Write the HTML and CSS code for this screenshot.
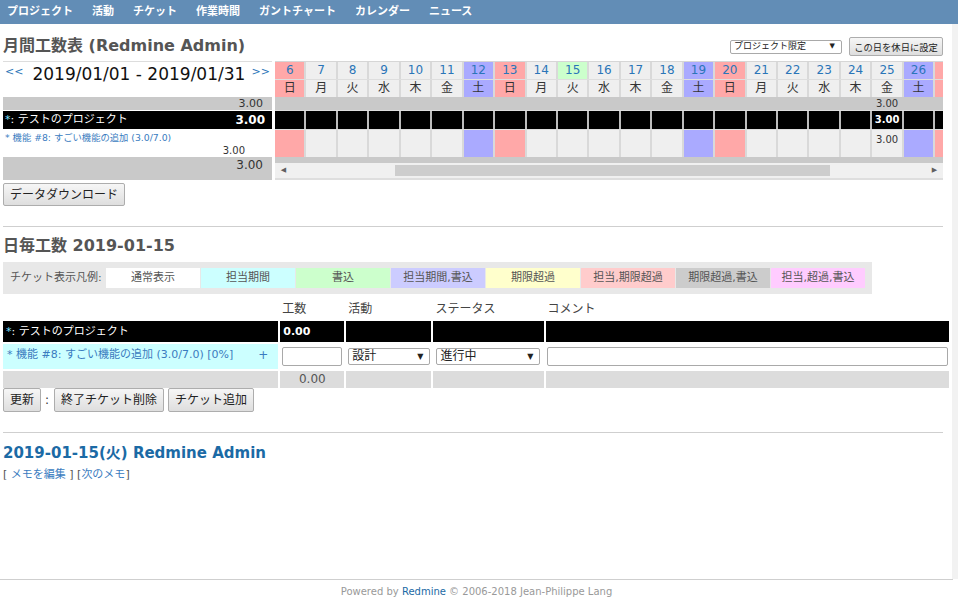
FILE: index.html
```html
<!DOCTYPE html>
<html lang="ja">
<head>
<meta charset="utf-8">
<title>月間工数表</title>
<link rel="stylesheet" href="styles.css">
</head>
<body>
<nav class="topnav">
  <a>プロジェクト</a><a>活動</a><a>チケット</a><a>作業時間</a><a>ガントチャート</a><a>カレンダー</a><a>ニュース</a>
</nav>
<div class="main">
  <div class="content">
    <div class="title-row">
      <h2>月間工数表 (Redmine Admin)</h2>
      <div class="actions">
        <span class="sel sel-small"><span>プロジェクト限定</span><span class="arr">▼</span></span>
        <button class="btn btn-small">この日を休日に設定</button>
      </div>
    </div>

    <div class="month">
      <div class="mleft">
        <div class="mhead"><a class="nav-arrow">&lt;&lt;</a><span class="range">2019/01/01 - 2019/01/31</span><a class="nav-arrow nav-next">&gt;&gt;</a></div>
        <div class="lrow lgray">3.00</div>
        <div class="lrow lblack"><span><span class="star">*</span>: テストのプロジェクト</span><b>3.00</b></div>
        <div class="lrow lticket"><a>* 機能 #8: すごい機能の追加 (3.0/7.0)</a><span class="lt-val">3.00</span></div>
        <div class="lrow lgray lbottom">3.00</div>
      </div>
      <div class="mright">
        <div class="drow dates">
          <div class="sun">6</div><div>7</div><div>8</div><div>9</div><div>10</div><div>11</div><div class="sat">12</div><div class="sun">13</div><div>14</div><div class="today">15</div><div>16</div><div>17</div><div>18</div><div class="sat">19</div><div class="sun">20</div><div>21</div><div>22</div><div>23</div><div>24</div><div>25</div><div class="sat">26</div><div class="sun"></div>
        </div>
        <div class="drow wdays">
          <div class="sun">日</div><div>月</div><div>火</div><div>水</div><div>木</div><div>金</div><div class="sat">土</div><div class="sun">日</div><div>月</div><div>火</div><div>水</div><div>木</div><div>金</div><div class="sat">土</div><div class="sun">日</div><div>月</div><div>火</div><div>水</div><div>木</div><div>金</div><div class="sat">土</div><div class="sun"></div>
        </div>
        <div class="drow dgray">
          <div></div><div></div><div></div><div></div><div></div><div></div><div></div><div></div><div></div><div></div><div></div><div></div><div></div><div></div><div></div><div></div><div></div><div></div><div></div><div>3.00</div><div></div><div></div>
        </div>
        <div class="drow dblack">
          <div></div><div></div><div></div><div></div><div></div><div></div><div></div><div></div><div></div><div></div><div></div><div></div><div></div><div></div><div></div><div></div><div></div><div></div><div></div><div>3.00</div><div></div><div></div>
        </div>
        <div class="drow dticket">
          <div class="sun"></div><div></div><div></div><div></div><div></div><div></div><div class="sat"></div><div class="sun"></div><div></div><div></div><div></div><div></div><div></div><div class="sat"></div><div class="sun"></div><div></div><div></div><div></div><div></div><div>3.00</div><div class="sat"></div><div class="sun"></div>
        </div>
        <div class="dfoot"></div>
        <div class="hscroll">
          <span class="sb-btn">◀</span>
          <div class="sb-track"><div class="sb-thumb"></div></div>
          <span class="sb-btn">▶</span>
        </div>
      </div>
    </div>

    <button class="btn btn-dl">データダウンロード</button>

    <hr class="sep sep1">

    <h2 class="h2-daily">日毎工数 2019-01-15</h2>

    <div class="legend">
      <span class="legend-label">チケット表示凡例:</span>
      <span class="lg lg-normal">通常表示</span>
      <span class="lg lg-assign">担当期間</span>
      <span class="lg lg-write">書込</span>
      <span class="lg lg-aw">担当期間,書込</span>
      <span class="lg lg-over">期限超過</span>
      <span class="lg lg-ao">担当,期限超過</span>
      <span class="lg lg-ow">期限超過,書込</span>
      <span class="lg lg-aow">担当,超過,書込</span>
    </div>

    <table class="daily">
      <colgroup><col class="c1"><col class="c2"><col class="c3"><col class="c4"><col class="c5"></colgroup>
      <thead>
        <tr><th></th><th>工数</th><th>活動</th><th>ステータス</th><th>コメント</th></tr>
      </thead>
      <tbody>
        <tr class="r-black"><td><span class="star">*</span>: テストのプロジェクト</td><td><b>0.00</b></td><td></td><td></td><td></td></tr>
        <tr class="r-ticket">
          <td class="tk"><div class="tk-inner"><a>* 機能 #8: すごい機能の追加 (3.0/7.0) [0%]</a><span class="plus">+</span></div></td>
          <td><input class="inp inp-hours" type="text"></td>
          <td><span class="sel sel-act"><span>設計</span><span class="arr">▼</span></span></td>
          <td><span class="sel sel-st"><span>進行中</span><span class="arr">▼</span></span></td>
          <td><input class="inp inp-comment" type="text"></td>
        </tr>
        <tr class="r-total"><td></td><td class="tot">0.00</td><td></td><td></td><td></td></tr>
      </tbody>
    </table>

    <div class="buttons">
      <button class="btn">更新</button><span class="colon">:</span><button class="btn">終了チケット削除</button><button class="btn">チケット追加</button>
    </div>

    <hr class="sep sep2">

    <h3 class="memo-title">2019-01-15(火) Redmine Admin</h3>
    <p class="memo-links">[ <a>メモを編集</a> ] [<a>次のメモ</a>]</p>
  </div>
  <div class="strip"></div>
</div>
<footer class="footer">Powered by <a>Redmine</a> © 2006-2018 Jean-Philippe Lang</footer>
</body>
</html>
```

FILE: styles.css
```css
* { box-sizing: border-box; }

html, body { margin: 0; padding: 0; }

body {
  width: 958px;
  min-height: 611px;
  display: flex;
  flex-direction: column;
  background: #fff;
  color: #333;
  font-family: "DejaVu Sans", "Noto Sans CJK JP", sans-serif;
  font-size: 12px;
  line-height: 1.2;
}

a { color: #1b6aa5; text-decoration: none; }

/* top menu */
.topnav {
  height: 24px;
  background: #628db6;
  display: flex;
  align-items: center;
  gap: 19px;
  padding-left: 7px;
}
.topnav a {
  color: #fff;
  font-weight: bold;
  font-size: 11px;
}

.main {
  flex: 1;
  display: flex;
}
.content {
  width: 952px;
  padding: 0 9px 0 3px;
}
.strip {
  flex: 1;
  background: #f2f2f2;
}

/* title */
.title-row {
  margin-top: 12px;
  height: 20px;
  display: flex;
  justify-content: space-between;
  align-items: center;
}
h2 {
  margin: 0;
  font-size: 16px;
  font-weight: bold;
  color: #555;
  line-height: 20px;
}
.actions {
  display: flex;
  align-items: center;
  gap: 7px;
}

/* generic controls */
.btn {
  font-family: inherit;
  font-size: 12px;
  color: #222;
  height: 24px;
  padding: 0 6px;
  border: 1px solid #adadad;
  border-radius: 2px;
  background: linear-gradient(#f6f6f6, #dedede);
  line-height: 20px;
}
.btn-small {
  font-size: 9.3px;
  height: 19px;
  width: 94px;
  padding: 0;
  text-align: center;
}
.sel {
  display: inline-flex;
  align-items: center;
  justify-content: space-between;
  border: 1px solid #a9a9a9;
  border-radius: 2px;
  background: #fff;
  color: #222;
  padding: 0 6px 0 3px;
}
.sel .arr {
  font-size: 8px;
  color: #222;
}
.sel-small {
  width: 112px;
  height: 14px;
  font-size: 9px;
  margin-top: 1px;
}
.sel-small .arr { font-size: 7px; }

/* month table */
.month {
  margin-top: 5px;
  display: flex;
  gap: 3px;
  height: 119px;
}
.mleft {
  width: 269px;
  border-top: 1px solid #ddd;
  display: flex;
  flex-direction: column;
}
.mhead {
  height: 35px;
  display: flex;
  align-items: flex-start;
  padding: 2px 2px 0 2px;
}
.nav-arrow {
  font-size: 11px;
  color: #2a75b8;
  margin-top: 1px;
}
.nav-next { margin-left: auto; }
.range {
  font-size: 17px;
  color: #111;
  margin-left: 9px;
}
.lrow {
  display: flex;
  justify-content: flex-end;
  align-items: center;
  padding: 0 9px;
}
.lgray {
  height: 13px;
  background: #c9c9c9;
  font-size: 11px;
  color: #333;
  margin-bottom: 1px;
}
.lblack {
  height: 18px;
  background: #000;
  color: #fff;
  font-size: 11px;
  justify-content: space-between;
  padding: 0 7px 0 2px;
  margin-bottom: 1px;
}
.lblack b { font-size: 12px; }
.star { color: #7fe0ff; }
.lticket {
  height: 27px;
  flex-direction: column;
  align-items: stretch;
  justify-content: flex-start;
  padding: 2px 27px 0 2px;
}
.lticket a {
  font-size: 9.3px;
  color: #3a7cc0;
  line-height: 12px;
  white-space: nowrap;
}
.lt-val {
  font-size: 10px;
  text-align: right;
  line-height: 12px;
  margin-top: 1px;
}
.lbottom {
  height: 23px;
  align-items: flex-start;
  padding-top: 1px;
  font-size: 12px;
  margin-bottom: 0;
}

.mright {
  width: 668px;
  overflow: hidden;
  border-top: 1px solid #d6d6d6;
  background: #dedede;
  display: flex;
  flex-direction: column;
}
.drow {
  display: grid;
  grid-template-columns: repeat(22, 29.45px);
  column-gap: 2px;
  flex: none;
}
.drow > div {
  display: flex;
  align-items: center;
  justify-content: center;
  background: #efefef;
}
.dates { height: 17px; margin-bottom: 1px; background: #d9d9d9; }
.dates > div { color: #2a75b8; font-size: 12px; }
.wdays { height: 17px; background: #d9d9d9; }
.wdays > div { color: #333; font-size: 12px; }
.drow > .sun { background: #ffa8a8; }
.drow > .sat { background: #aaaaff; }
.drow > .today { background: #ccffcc; }
.dgray { height: 13px; background: #c9c9c9; margin-bottom: 1px; }
.dgray > div { background: transparent; font-size: 10px; color: #333; }
.dblack { height: 18px; background: #bdbdbd; margin-bottom: 1px; }
.dblack > div { background: #000; color: #fff; font-weight: bold; font-size: 10px; }
.dticket { height: 27px; background: #d9d9d9; }
.dticket > div { align-items: flex-start; padding-top: 4px; font-size: 10px; color: #333; }
.dfoot { height: 6px; background: #c9c9c9; flex: none; }
.hscroll {
  height: 15px;
  background: #f0f0f0;
  display: flex;
  align-items: center;
  flex: none;
}
.sb-btn {
  width: 17px;
  text-align: center;
  font-size: 7px;
  color: #606060;
}
.sb-track {
  flex: 1;
  height: 100%;
  display: flex;
  align-items: center;
}
.sb-thumb {
  margin-left: 103px;
  width: 435px;
  height: 11px;
  background: #cdcdcd;
}

.btn-dl { margin-top: 3px; height: 23px; }

.sep {
  border: 0;
  height: 1px;
  background: #cfcfcf;
  margin: 0;
}
.sep1 { margin-top: 20px; }
.h2-daily { margin-top: 9px; }

/* legend */
.legend {
  margin-top: 6px;
  width: 869px;
  height: 32px;
  background: #e8e8e8;
  display: flex;
  align-items: center;
  gap: 1px;
  padding-left: 7px;
}
.legend-label {
  width: 95px;
  font-size: 11px;
  color: #555;
}
.lg {
  width: 94px;
  height: 20px;
  display: flex;
  align-items: center;
  justify-content: center;
  font-size: 11px;
  color: #555;
}
.lg-normal { background: #fff; }
.lg-assign { background: #ccffff; }
.lg-write { background: #ccffcc; }
.lg-aw { background: #ccccff; }
.lg-over { background: #ffffcc; }
.lg-ao { background: #ffcccc; }
.lg-ow { background: #cccccc; }
.lg-aow { background: #ffccff; }

/* daily table */
.daily {
  margin-left: -2px;
  margin-top: 3px;
  border-collapse: separate;
  border-spacing: 2px;
  table-layout: fixed;
  width: 950px;
}
.c1 { width: 275px; }
.c2 { width: 64px; }
.c3 { width: 85px; }
.c4 { width: 110px; }
.c5 { width: 403px; }
.daily th {
  text-align: left;
  font-weight: normal;
  font-size: 12px;
  color: #444;
  padding: 3px 2px 0;
  height: 20px;
  vertical-align: top;
}
.daily td { padding: 0; }
.r-black td {
  background: #000;
  color: #fff;
  height: 21px;
  font-size: 11px;
  padding-left: 3px;
}
.r-black td b { font-size: 11px; }
.r-ticket td { height: 25px; vertical-align: middle; }
.r-ticket td.tk { background: #ccffff; }
.tk-inner {
  display: flex;
  justify-content: space-between;
  padding: 0 10px 2px 4px;
}
.tk-inner a { font-size: 11px; color: #3a7cc0; white-space: nowrap; }
.plus { font-size: 12px; color: #3a7cc0; }
.inp {
  height: 19px;
  border: 1px solid #a9a9a9;
  border-radius: 2px;
  background: #fff;
  margin-left: 2px;
  display: block;
}
.inp-hours { width: 60px; }
.inp-comment { width: 401px; margin-left: 1px; }
.sel-act { width: 82px; height: 17px; margin-left: 2px; font-size: 12px; }
.sel-st { width: 104px; height: 17px; margin-left: 3px; font-size: 12px; }
.r-total td {
  background: #dcdcdc;
  height: 17px;
}
.r-total td.tot {
  text-align: center;
  color: #555;
  font-size: 12px;
}

.buttons {
  margin-top: -2px;
  display: flex;
  align-items: center;
  gap: 4px;
}
.colon { margin: 0 1px 0 0; font-size: 12px; color: #333; }

.sep2 { margin-top: 20px; }

.memo-title {
  margin: 9px 0 0;
  font-size: 15px;
  font-weight: bold;
  color: #1b6aa5;
  line-height: 22px;
}
.memo-links {
  margin: 4px 0 0;
  font-size: 11px;
  color: #555;
}
.memo-links a { color: #3a7cc0; }

.footer {
  height: 32px;
  border-top: 1px solid #cfcfcf;
  text-align: center;
  font-size: 10px;
  color: #999;
  padding-top: 6px;
  width: 953px;
}
.footer a { color: #1b6aa5; }
```
